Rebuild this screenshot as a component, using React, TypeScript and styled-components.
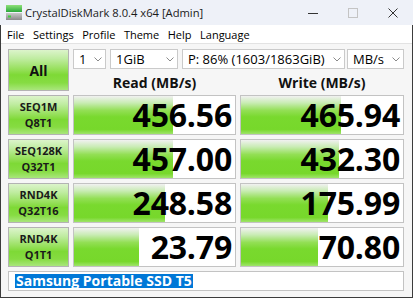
import React from 'react';
import styled, { createGlobalStyle } from 'styled-components';

const Global = createGlobalStyle`
  html, body { margin: 0; padding: 0; background: #ffffff; }
  body {
    width: 413px; height: 300px; overflow: hidden;
    font-family: "Open Sans", "Noto Sans", "DejaVu Sans", sans-serif;
  }
  * { box-sizing: border-box; }
`;

const Window = styled.div`
  width: 413px;
  height: 300px;
  display: flex;
  flex-direction: column;
  background: #ffffff;
`;

const TitleBar = styled.div`
  height: 25px;
  flex: none;
  display: flex;
  align-items: center;
  padding-left: 6px;
  background: #eef1f8;
`;

const Title = styled.span`
  margin-left: 3px;
  font-size: 11.2px;
  color: #1b1b1b;
`;

const Controls = styled.div`
  margin-left: auto;
  display: flex;
  height: 100%;
`;

const CtrlBtn = styled.div`
  width: 40px;
  height: 100%;
  display: flex;
  align-items: center;
  justify-content: center;
`;

const Frame = styled.div`
  height: 273px;
  flex: none;
  display: flex;
  flex-direction: column;
  border-left: 1px solid #3c3c3c;
  border-right: 1px solid #3c3c3c;
  border-bottom: 1px solid #3c3c3c;
  background: #f6f6f6;
`;

const MenuBar = styled.div`
  height: 19px;
  flex: none;
  display: flex;
  align-items: center;
  gap: 8.5px;
  padding-left: 6px;
  background: #ffffff;
  border-bottom: 1px solid #e3e3e3;
`;

const MenuItem = styled.span`
  font-size: 11px;
  color: #000;
`;

const Body = styled.div`
  flex: 1;
  padding: 5px 0 0 7px;
  display: grid;
  grid-template-columns: 61px 163px 164px;
  grid-template-rows: 20px 18px repeat(4, 40px) 20px;
  gap: 4px;
`;

const greenGrad = `linear-gradient(to bottom,
  #dcf4cb 0%, #bfeca0 22%, #97e05c 48%, #7ed936 62%, #86dc42 82%, #a9e67c 100%)`;

const AllButton = styled.div`
  grid-column: 1;
  grid-row: 1 / 3;
  border: 1px solid #b3b3b3;
  background: ${greenGrad};
  display: flex;
  align-items: center;
  justify-content: center;
  font-weight: 700;
  font-size: 14px;
  color: #111;
`;

const ComboRow = styled.div`
  grid-column: 2 / 4;
  grid-row: 1;
  display: flex;
`;

const Combo = styled.div<{ $w: number; $gap: number }>`
  width: ${p => p.$w}px;
  margin-right: ${p => p.$gap}px;
  height: 20px;
  border: 1px solid #cacaca;
  background: #ffffff;
  display: flex;
  align-items: center;
  padding-left: 5px;
  font-size: 13px;
  color: #000;
  white-space: nowrap;
  overflow: hidden;
`;

const ComboText = styled.span`
  flex: 1;
  overflow: hidden;
`;

const Chevron = styled.span`
  width: 14px;
  flex: none;
  display: flex;
  align-items: center;
  justify-content: center;
`;

const Header = styled.div<{ $col: number }>`
  grid-column: ${p => p.$col};
  grid-row: 2;
  display: flex;
  align-items: flex-end;
  justify-content: center;
  font-weight: 700;
  font-size: 14px;
  line-height: 16px;
  color: #111;
`;

const LabelButton = styled.div`
  grid-column: 1;
  border: 1px solid #b3b3b3;
  background: ${greenGrad};
  display: flex;
  flex-direction: column;
  align-items: center;
  justify-content: center;
  font-weight: 700;
  font-size: 11px;
  line-height: 16px;
  color: #1a1a1a;
`;

const Cell = styled.div`
  position: relative;
  border: 1px solid #c3c3c3;
  background: #ffffff;
  display: flex;
  align-items: center;
  justify-content: flex-end;
`;

const Bar = styled.div`
  position: absolute;
  left: 0;
  top: 0;
  bottom: 0;
  background: linear-gradient(to bottom,
    #f1f1f1 0%, #c9ecb4 18%, #93df55 38%, #79d92e 55%, #77d82b 88%, #9fe46a 100%);
`;

const Value = styled.span`
  position: relative;
  font-weight: 700;
  font-size: 32px;
  line-height: 1;
  color: #000;
  padding-right: 3px;
  letter-spacing: -0.2px;
`;

const Comment = styled.div`
  grid-column: 1 / 4;
  border: 1px solid #c3c3c3;
  background: #ffffff;
  display: flex;
  align-items: center;
  padding-left: 6px;
`;

const Selected = styled.span`
  background: #0078d7;
  color: #ffffff;
  font-weight: 700;
  font-size: 14px;
  line-height: 14px;
  padding: 0 1px;
`;

const ChevronIcon = () => (
  <svg width="8" height="5" viewBox="0 0 8 5">
    <path d="M0.5 0.5 L4 4 L7.5 0.5" fill="none" stroke="#8a8a8a" strokeWidth="1" />
  </svg>
);

const AppIcon = () => (
  <svg width="16" height="15" viewBox="0 0 16 15">
    <defs>
      <linearGradient id="gtop" x1="0" y1="0" x2="0" y2="1">
        <stop offset="0" stopColor="#8fe07a" />
        <stop offset="1" stopColor="#2aa83a" />
      </linearGradient>
      <linearGradient id="gbot" x1="0" y1="0" x2="0" y2="1">
        <stop offset="0" stopColor="#c9c9c9" />
        <stop offset="1" stopColor="#8a8a8a" />
      </linearGradient>
    </defs>
    <rect x="0" y="0" width="16" height="7" fill="url(#gtop)" />
    <rect x="0" y="8" width="16" height="7" fill="url(#gbot)" />
    <rect x="2" y="10.5" width="3" height="2" fill="#3fcf3f" />
  </svg>
);

type Row = { l1: string; l2: string; r: string; rp: number; w: string; wp: number };

const rows: Row[] = [
  { l1: 'SEQ1M', l2: 'Q8T1', r: '456.56', rp: 61.5, w: '465.94', wp: 61.5 },
  { l1: 'SEQ128K', l2: 'Q32T1', r: '457.00', rp: 61.5, w: '432.30', wp: 60.2 },
  { l1: 'RND4K', l2: 'Q32T16', r: '248.58', rp: 56.8, w: '175.99', wp: 54.0 },
  { l1: 'RND4K', l2: 'Q1T1', r: '23.79', rp: 40.2, w: '70.80', wp: 47.5 },
];

export default function App() {
  return (
    <Window>
      <Global />
      <TitleBar>
        <AppIcon />
        <Title>CrystalDiskMark 8.0.4 x64 [Admin]</Title>
        <Controls>
          <CtrlBtn>
            <svg width="10" height="10" viewBox="0 0 10 10">
              <path d="M0 5.5 H10" stroke="#333" strokeWidth="1" />
            </svg>
          </CtrlBtn>
          <CtrlBtn>
            <svg width="10" height="10" viewBox="0 0 10 10">
              <rect x="0.5" y="0.5" width="9" height="9" fill="none" stroke="#c4c4c4" strokeWidth="1" />
            </svg>
          </CtrlBtn>
          <CtrlBtn>
            <svg width="10" height="10" viewBox="0 0 10 10">
              <path d="M0.5 0.5 L9.5 9.5 M9.5 0.5 L0.5 9.5" stroke="#333" strokeWidth="1" />
            </svg>
          </CtrlBtn>
        </Controls>
      </TitleBar>
      <Frame>
        <MenuBar>
          <MenuItem>File</MenuItem>
          <MenuItem>Settings</MenuItem>
          <MenuItem>Profile</MenuItem>
          <MenuItem>Theme</MenuItem>
          <MenuItem>Help</MenuItem>
          <MenuItem>Language</MenuItem>
        </MenuBar>
        <Body>
          <AllButton>All</AllButton>
          <ComboRow>
            <Combo $w={33} $gap={4}><ComboText>1</ComboText><Chevron><ChevronIcon /></Chevron></Combo>
            <Combo $w={68} $gap={4}><ComboText>1GiB</ComboText><Chevron><ChevronIcon /></Chevron></Combo>
            <Combo $w={163} $gap={2}><ComboText>P: 86% (1603/1863GiB)</ComboText><Chevron><ChevronIcon /></Chevron></Combo>
            <Combo $w={57} $gap={0}><ComboText>MB/s</ComboText><Chevron><ChevronIcon /></Chevron></Combo>
          </ComboRow>
          <Header $col={2}>Read (MB/s)</Header>
          <Header $col={3}>Write (MB/s)</Header>
          {rows.map((r, i) => (
            <React.Fragment key={i}>
              <LabelButton>
                <span>{r.l1}</span>
                <span>{r.l2}</span>
              </LabelButton>
              <Cell>
                <Bar style={{ width: `${r.rp}%` }} />
                <Value>{r.r}</Value>
              </Cell>
              <Cell>
                <Bar style={{ width: `${r.wp}%` }} />
                <Value>{r.w}</Value>
              </Cell>
            </React.Fragment>
          ))}
          <Comment>
            <Selected>Samsung Portable SSD T5</Selected>
          </Comment>
        </Body>
      </Frame>
    </Window>
  );
}
